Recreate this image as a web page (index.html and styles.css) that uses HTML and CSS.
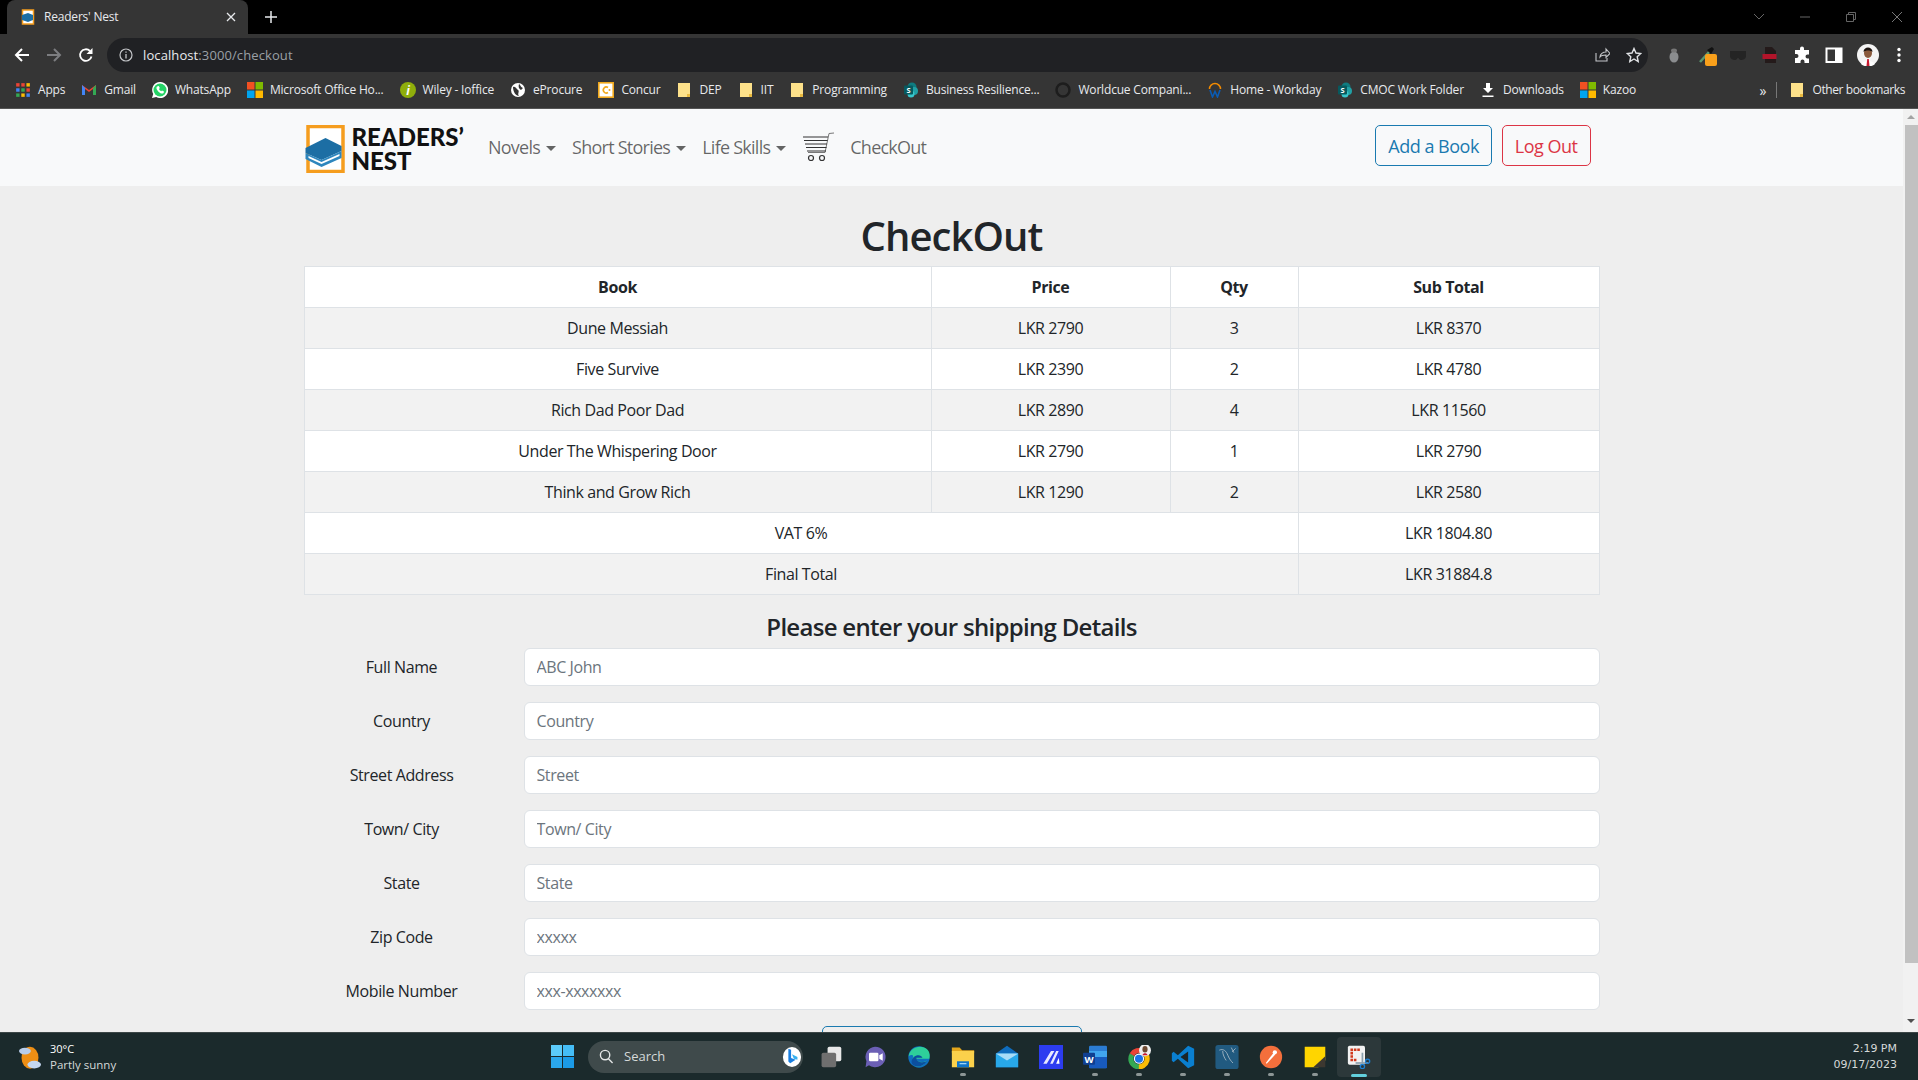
FILE: index.html

```html
<!DOCTYPE html>
<html lang="en">
<head>
    <meta charset="UTF-8">
    <title>Readers' Nest</title>
    <link rel="stylesheet" href="styles.css">
</head>
<body>

<svg class="defs" width="0" height="0">
    <symbol id="folder" viewBox="0 0 16 16"><path d="M2 1h9l3 0v14H2z" fill="#fde18a"/><path d="M11 15v-3h3v3z" fill="#e9b93f"/></symbol>
    <symbol id="sharepoint" viewBox="0 0 16 16"><circle cx="9" cy="5" r="4.500" fill="#0f7c80"/><circle cx="11" cy="9" r="4" fill="#21a0a5"/><circle cx="8" cy="12" r="3.500" fill="#37c6cc"/><rect x="1" y="3.500" width="9" height="9" rx="1" fill="#07595e"/></symbol>
    <symbol id="msgrid" viewBox="0 0 16 16"><rect width="7.500" height="7.500" fill="#f25022"/><rect x="8.500" width="7.500" height="7.500" fill="#7fba00"/><rect y="8.500" width="7.500" height="7.500" fill="#00a4ef"/><rect x="8.500" y="8.500" width="7.500" height="7.500" fill="#ffb900"/></symbol>
</svg>

<div class="tabstrip">
    <div class="tab">
        <svg class="tab-icon" viewBox="0 0 16 16"><rect x="2.500" y="1" width="11" height="14" fill="#fff" stroke="#f59d1e" stroke-width="1.500"/><path d="M2 6l6-2 5 2v5l-5 2-6-2z" fill="#1c6ea4"/></svg>
        <span class="tab-title">Readers' Nest</span>
        <svg class="tab-close" viewBox="0 0 10 10"><path d="M1 1l8 8M9 1l-8 8" stroke="#e8eaed" stroke-width="1.300"/></svg>
    </div>
    <svg class="new-tab" viewBox="0 0 12 12"><path d="M6 0v12M0 6h12" stroke="#e8eaed" stroke-width="1.500"/></svg>
    <div class="window-controls">
        <svg viewBox="0 0 12 12"><path d="M1 3l5 5 5-5" fill="none" stroke="#666" stroke-width="1"/></svg>
        <svg viewBox="0 0 12 12"><path d="M1 6h10" stroke="#666" stroke-width="1"/></svg>
        <svg viewBox="0 0 12 12"><path d="M1.500 3.500h7v7h-7zM3.500 3.500v-2h7v7h-2" fill="none" stroke="#666" stroke-width="1"/></svg>
        <svg viewBox="0 0 12 12"><path d="M1 1l10 10M11 1L1 11" stroke="#777" stroke-width="1"/></svg>
    </div>
</div>

<div class="toolbar">
    <svg class="tool-btn" viewBox="0 0 16 16"><path d="M15 8H2M8 2L2 8l6 6" fill="none" stroke="#fff" stroke-width="2"/></svg>
    <svg class="tool-btn" viewBox="0 0 16 16"><path d="M1 8h13M8 2l6 6-6 6" fill="none" stroke="#7c7d80" stroke-width="2"/></svg>
    <svg class="tool-btn" viewBox="0 0 16 16"><path d="M13.500 9.500A5.800 5.800 0 1 1 12 4" fill="none" stroke="#fff" stroke-width="1.800"/><path d="M14.500 1v6h-6z" fill="#fff"/></svg>
    <div class="omnibox">
        <svg class="omni-info" viewBox="0 0 14 14"><circle cx="7" cy="7" r="6" fill="none" stroke="#c4c6c9" stroke-width="1.200"/><path d="M7 6v4.500M7 3.500v1.300" stroke="#c4c6c9" stroke-width="1.300"/></svg>
        <span class="url"><span class="url-host">localhost</span>:3000/checkout</span>
        <svg class="omni-share" viewBox="0 0 16 16"><path d="M2 6v8h11v-3M6 10c0-3 3-5 6-5V2l4 4.500-4 4V8c-3 0-5 .5-6 2z" fill="none" stroke="#c4c6c9" stroke-width="1.100"/></svg>
        <svg class="omni-star" viewBox="0 0 16 16"><path d="M8 1.500l2 4.500 4.800.5-3.600 3.200 1 4.800L8 12l-4.200 2.500 1-4.800L1.200 6.500 6 6z" fill="none" stroke="#e0e2e5" stroke-width="1.400"/></svg>
    </div>
    <div class="ext-icons">
        <svg viewBox="0 0 18 18"><ellipse cx="9" cy="11" rx="4.500" ry="5.500" fill="#8b8d8f"/><ellipse cx="9" cy="4.500" rx="3" ry="2" fill="#777"/></svg>
        <span class="ext-dropper">
            <svg viewBox="0 0 18 18"><path d="M3 16L12 6" stroke="#5b9a70" stroke-width="2.500"/><path d="M10 4l5-3 2 2-3 5z" fill="#111"/></svg>
            <span class="ext-badge"></span>
        </span>
        <svg viewBox="0 0 18 18"><path d="M1 5h16v5c0 3-3 4-5 4-2 0-2-2-3-2s-1 2-3 2c-2 0-5-1-5-4z" fill="#242424"/></svg>
        <svg viewBox="0 0 18 18"><path d="M4 1h7l4 4v12H4z" fill="#241a1a"/><rect x="1.500" y="8" width="14" height="5" fill="#b3142a"/></svg>
        <svg viewBox="0 0 18 18"><path d="M7 2.500a2 2 0 0 1 4 0V4h5v4.500h-1.500a2 2 0 0 0 0 4H16V17H11.500v-1.500a2 2 0 0 0-4 0V17H2v-5h1.500a2 2 0 0 0 0-4H2V4h5z" fill="#fff"/></svg>
        <svg viewBox="0 0 18 18"><rect x="1.500" y="2.500" width="15" height="13.500" fill="none" stroke="#fff" stroke-width="2"/><rect x="10" y="2.500" width="6.500" height="13.500" fill="#fff"/></svg>
        <svg class="avatar" viewBox="0 0 22 22"><circle cx="11" cy="11" r="11" fill="#f4f4f4"/><ellipse cx="11" cy="9" rx="4" ry="5" fill="#8a5a3c"/><path d="M6.500 8c0-6 9-6 9 0-2-2-7-2-9 0z" fill="#1d1410"/><path d="M4 20c2-4 12-4 14 0a11 11 0 0 1-14 0z" fill="#fff"/><path d="M10.200 15h1.600l.7 7h-3z" fill="#c8192f"/></svg>
        <svg class="ext-menu" viewBox="0 0 18 18"><circle cx="9" cy="3.500" r="1.700" fill="#fff"/><circle cx="9" cy="9" r="1.700" fill="#fff"/><circle cx="9" cy="14.500" r="1.700" fill="#fff"/></svg>
    </div>
</div>

<div class="bookmarks">
    <a class="bm"><svg viewBox="0 0 14 14"><path d="M1 1h3v3H1z" fill="#ea4335"/><path d="M5.500 1h3v3h-3z" fill="#ea4335"/><path d="M10 1h3v3h-3z" fill="#fbbc05"/><path d="M1 5.500h3v3H1z" fill="#4285f4"/><path d="M5.500 5.500h3v3h-3z" fill="#34a853"/><path d="M10 5.500h3v3h-3z" fill="#ea4335"/><path d="M1 10h3v3H1z" fill="#34a853"/><path d="M5.500 10h3v3h-3z" fill="#fbbc05"/><path d="M10 10h3v3h-3z" fill="#4285f4"/></svg>Apps</a>
    <a class="bm"><svg viewBox="0 0 16 16"><path d="M1 3v10h3V7l4 3 4-3v6h3V3l-7 5z" fill="#ea4335"/><path d="M1 3v10h3V6z" fill="#4285f4"/><path d="M15 3v10h-3V6z" fill="#34a853"/></svg>Gmail</a>
    <a class="bm"><svg viewBox="0 0 16 16"><path d="M8 0a8 8 0 0 0-6.800 12L0 16l4.200-1.100A8 8 0 1 0 8 0z" fill="#fff"/><circle cx="8" cy="8" r="6.500" fill="#25d366"/><path d="M5 4.500c-1 1-.8 3 1.500 5.200S10.500 12 11.600 11l.4-1.500-2-1-.8.8c-1-.4-1.800-1.200-2.200-2.200L7.800 6l-1-2z" fill="#fff"/></svg>WhatsApp</a>
    <a class="bm"><svg viewBox="0 0 16 16"><use href="#msgrid"/></svg>Microsoft Office Ho...</a>
    <a class="bm"><svg viewBox="0 0 16 16"><circle cx="8" cy="8" r="8" fill="#8fae0b"/><text x="8" y="13" font-size="12" font-style="italic" font-weight="700" text-anchor="middle" fill="#fff">i</text></svg>Wiley - Ioffice</a>
    <a class="bm"><svg viewBox="0 0 16 16"><circle cx="8" cy="8" r="7" fill="#fff"/><path d="M3 5c3-1 3 2 5 3s-1 4 1 6c-3 0-6-4-6-9zM9 2c2 1 1 3 4 4l-2 2c-2-1-3-3-2-6z" fill="#333"/></svg>eProcure</a>
    <a class="bm"><svg viewBox="0 0 16 16"><rect x=".8" y=".8" width="14.400" height="14.400" fill="#fff" stroke="#f0a81c" stroke-width="1.600"/><path d="M10 5.500a3 3 0 1 0 0 5" fill="none" stroke="#f0a81c" stroke-width="1.600"/><circle cx="11.500" cy="8" r="1" fill="#f0a81c"/></svg>Concur</a>
    <a class="bm"><svg viewBox="0 0 16 16"><use href="#folder"/></svg>DEP</a>
    <a class="bm"><svg viewBox="0 0 16 16"><use href="#folder"/></svg>IIT</a>
    <a class="bm"><svg viewBox="0 0 16 16"><use href="#folder"/></svg>Programming</a>
    <a class="bm"><svg viewBox="0 0 16 16"><use href="#sharepoint"/><text x="5.500" y="11" font-size="7.500" font-weight="700" text-anchor="middle" fill="#fff">S</text></svg>Business Resilience...</a>
    <a class="bm"><svg viewBox="0 0 16 16"><circle cx="8" cy="8" r="6.500" fill="none" stroke="#1d1d1d" stroke-width="2.500"/></svg>Worldcue Compani...</a>
    <a class="bm"><svg viewBox="0 0 16 16"><path d="M2.500 7a5.500 5.500 0 0 1 11 0" fill="none" stroke="#f38b00" stroke-width="1.500"/><path d="M3 8l2.500 7L8 9.500 10.500 15 13 8" fill="none" stroke="#0a5bb5" stroke-width="1.600"/></svg>Home - Workday</a>
    <a class="bm"><svg viewBox="0 0 16 16"><use href="#sharepoint"/><text x="5.500" y="11" font-size="7.500" font-weight="700" text-anchor="middle" fill="#fff">S</text></svg>CMOC Work Folder</a>
    <a class="bm"><svg viewBox="0 0 16 16"><path d="M6 1h4v5h3l-5 5-5-5h3zM2.500 13.500h11V15h-11z" fill="#fff"/></svg>Downloads</a>
    <a class="bm"><svg viewBox="0 0 16 16"><use href="#msgrid"/></svg>Kazoo</a>
    <span class="bm-more">»</span>
    <span class="bm-sep"></span>
    <a class="bm bm-other"><svg viewBox="0 0 16 16"><use href="#folder"/></svg>Other bookmarks</a>
</div>

<div class="viewport">
    <div class="page">
        <nav class="navbar">
            <div class="nav-inner">
                <a class="brand">
                    <svg class="brand-logo" viewBox="0 0 40 48"><rect x="3.500" y="1.500" width="35" height="45" fill="#fff" stroke="#f59d1e" stroke-width="3.500"/><path d="M1 23l20-10 16 8v5L17 35 1 28z" fill="#1c6ea4"/><path d="M1 28l16 7 20-9v7L17 42 1 34z" fill="#2e86bd"/><path d="M4 31l13 6 18-8v2l-18 8-13-6z" fill="#fff"/></svg>
                    <span class="brand-text">READERS’<br>NEST</span>
                </a>
                <ul class="nav-links">
                    <li><a class="nav-link caret">Novels</a></li>
                    <li><a class="nav-link caret">Short Stories</a></li>
                    <li><a class="nav-link caret">Life Skills</a></li>
                    <li class="cart">
                        <svg viewBox="0 0 32 30"><path d="M32 1l-5 .5-4 19H6" fill="none" stroke="#777" stroke-width="1"/><path d="M1 5h25M2 8.500h23.500M3 12h22M4 15.500h20.500M5 19h19" stroke="#333" stroke-width="1.200"/><circle cx="9" cy="26" r="2.500" fill="none" stroke="#333" stroke-width="1.200"/><circle cx="20" cy="26" r="2.500" fill="none" stroke="#333" stroke-width="1.200"/></svg>
                    </li>
                    <li><a class="nav-link">CheckOut</a></li>
                </ul>
                <div class="nav-actions">
                    <button class="btn btn-blue">Add a Book</button>
                    <button class="btn btn-red">Log Out</button>
                </div>
            </div>
        </nav>

        <main class="container">
            <h1>CheckOut</h1>
            <table class="cart-table">
                <thead>
                    <tr><th>Book</th><th>Price</th><th>Qty</th><th>Sub Total</th></tr>
                </thead>
                <tbody>
                    <tr><td>Dune Messiah</td><td>LKR 2790</td><td>3</td><td>LKR 8370</td></tr>
                    <tr><td>Five Survive</td><td>LKR 2390</td><td>2</td><td>LKR 4780</td></tr>
                    <tr><td>Rich Dad Poor Dad</td><td>LKR 2890</td><td>4</td><td>LKR 11560</td></tr>
                    <tr><td>Under The Whispering Door</td><td>LKR 2790</td><td>1</td><td>LKR 2790</td></tr>
                    <tr><td>Think and Grow Rich</td><td>LKR 1290</td><td>2</td><td>LKR 2580</td></tr>
                    <tr><td colspan="3">VAT 6%</td><td>LKR 1804.80</td></tr>
                    <tr><td colspan="3">Final Total</td><td>LKR 31884.8</td></tr>
                </tbody>
            </table>

            <h2>Please enter your shipping Details</h2>
            <form class="ship-form">
                <label>Full Name</label><input type="text" placeholder="ABC John">
                <label>Country</label><input type="text" placeholder="Country">
                <label>Street Address</label><input type="text" placeholder="Street">
                <label>Town/ City</label><input type="text" placeholder="Town/ City">
                <label>State</label><input type="text" placeholder="State">
                <label>Zip Code</label><input type="text" placeholder="xxxxx">
                <label>Mobile Number</label><input type="text" placeholder="xxx-xxxxxxx">
            </form>
            <div class="submit-row"><button class="btn btn-blue btn-submit"></button></div>
        </main>
    </div>
    <div class="scrollbar">
        <span class="arrow-up"></span>
        <span class="thumb"></span>
        <span class="arrow-down"></span>
    </div>
</div>

<footer class="taskbar">
    <div class="weather">
        <svg viewBox="0 0 26 30"><ellipse cx="13" cy="16" rx="10" ry="13" fill="#ee8e14"/><ellipse cx="7" cy="8" rx="7" ry="4" fill="#b9cdea"/><ellipse cx="18" cy="24" rx="8" ry="4.500" fill="#c4d6ef"/></svg>
        <div class="weather-text"><span class="temp">30°C</span><span class="cond">Partly sunny</span></div>
    </div>
    <div class="task-center">
        <svg class="task-icon" viewBox="0 0 24 24"><path d="M0 0h11.500v11.500H0z" fill="#5ccbfa"/><path d="M12.500 0H24v11.500H12.500z" fill="#45bdf6"/><path d="M0 12.500h11.500V24H0z" fill="#2aa7ec"/><path d="M12.500 12.500H24V24H12.500z" fill="#1b9ae6"/></svg>
        <div class="search">
            <svg viewBox="0 0 16 16"><circle cx="6.500" cy="6.500" r="5" fill="none" stroke="#e4e6e6" stroke-width="1.500"/><path d="M10 10.500l4.500 4.500" stroke="#e4e6e6" stroke-width="1.500"/></svg>
            <span>Search</span>
            <svg class="bing" viewBox="0 0 22 24"><ellipse cx="11" cy="12" rx="10" ry="11" fill="#fff"/><path d="M7 3l3 1v9l5 2-6 4-2-2z" fill="#1a7fe0"/><path d="M11 9l6 3v3l-4-1z" fill="#35b0f0"/></svg>
        </div>
        <div class="task-apps">
            <span class="app"><svg viewBox="0 0 28 28"><rect x="10" y="2" width="16" height="17" rx="2" fill="#e8e8e8"/><rect x="3" y="9" width="17" height="17" rx="2" fill="#6f6f6f"/></svg></span>
            <span class="app"><svg viewBox="0 0 28 28"><path d="M14 2a12 12 0 1 1-7 21.500L3 26l1-7A12 12 0 0 1 14 2z" fill="#6b5fb5"/><rect x="7" y="9" width="11" height="10" rx="1.500" fill="#fff"/><path d="M19 12l4-2.500v9L19 16z" fill="#fff"/></svg></span>
            <span class="app"><svg viewBox="0 0 28 28"><circle cx="14" cy="14" r="12.500" fill="#0f6fbf"/><path d="M2 13C3 4 13 0 20 3s7 9 6 13H11c1 4 8 5 12 2-3 6-10 9-15 6 3 0-3-4-1-10 1-3-3-3-5-1z" fill="#2ecf9a"/><path d="M8 14c3-3 9-3 10 1H11c0 4 5 7 12 4-3 5-10 8-15 5-4-3-3-7 0-10z" fill="#0c4f9e"/></svg></span>
            <span class="app open"><svg viewBox="0 0 28 28"><path d="M1 3h9l3 3h14v3H1z" fill="#e3a61c"/><path d="M1 7h26v19H1z" fill="#fbd14b"/><rect x="7" y="19" width="14" height="7" fill="#0f74c9"/><rect x="10" y="21" width="8" height="1.500" fill="#9fd4f5"/></svg></span>
            <span class="app"><svg viewBox="0 0 28 28"><path d="M14 1L1 10v16h26V10z" fill="#0f6cbd"/><path d="M1 10h26v16H1z" fill="#28a8ea"/><path d="M1 10l13 8 13-8" fill="#a8dcf7"/></svg></span>
            <span class="app"><svg viewBox="0 0 28 28"><rect width="28" height="28" fill="#2c3cf0"/><path d="M5 22L14 7h4L9 22zM13 22l7-15h3l-7 15z" fill="#e8e8ff"/><path d="M20 22l3-7 1 7z" fill="#fff"/></svg></span>
            <span class="app open"><svg viewBox="0 0 28 28"><rect x="7" y="1" width="21" height="26" rx="1.500" fill="#2b7cd3"/><rect x="7" y="14" width="21" height="13" fill="#185abd"/><rect x="7" y="7" width="21" height="7" fill="#41a5ee"/><rect y="9" width="14" height="14" rx="1" fill="#103f91"/><text x="7" y="20.500" font-size="11" font-weight="700" text-anchor="middle" fill="#fff">W</text></svg></span>
            <span class="app open"><svg viewBox="0 0 28 28"><circle cx="14" cy="16" r="9.500" fill="none" stroke="#34a853" stroke-width="6" stroke-dasharray="20 40" transform="rotate(90 14 16)"/><circle cx="14" cy="16" r="9.500" fill="none" stroke="#fbbc05" stroke-width="6" stroke-dasharray="20 40" transform="rotate(-30 14 16)"/><circle cx="14" cy="16" r="9.500" fill="none" stroke="#ea4335" stroke-width="6" stroke-dasharray="20 40" transform="rotate(210 14 16)"/><circle cx="14" cy="16" r="6" fill="#fff"/><circle cx="14" cy="16" r="4.700" fill="#1a73e8"/><circle cx="21" cy="6" r="7" fill="#eee"/><ellipse cx="21" cy="5" rx="3" ry="3.800" fill="#6e4a32"/><path d="M18 12c1-3 5-3 6 0z" fill="#c8192f"/></svg></span>
            <span class="app open"><svg viewBox="0 0 28 28"><path d="M20 1l7 3.500v19L20 27 8 16l-5 4-2-1.500V9.500L3 8l5 4z" fill="#0a7fd0"/><path d="M20 7.500L11 14l9 6.500z" fill="#1b2528"/></svg></span>
            <span class="app open"><svg viewBox="0 0 28 28"><rect width="27" height="28" x=".5" rx="3" fill="#215a80"/><path d="M5 6c5-2 8 1 10 6s4 7 6 9M9 7c0 4 2 8 4 11M19 3l3 6M24 4l-4 4" fill="none" stroke="#b9c6cf" stroke-width=".9"/></svg></span>
            <span class="app open"><svg viewBox="0 0 28 28"><circle cx="14" cy="14" r="13" fill="#f36f3c"/><path d="M8 21l9-12 2 2-10 11z" fill="#fff"/><circle cx="18.500" cy="8.500" r="2.500" fill="#fff"/></svg></span>
            <span class="app open"><svg viewBox="0 0 28 28"><path d="M2 2h24v16l-8 8H2z" fill="#ffd500"/><path d="M26 13v13H12z" fill="#3d3830"/></svg></span>
            <span class="app active"><svg viewBox="0 0 28 28"><rect x="1" y="1" width="20" height="22" rx="2" fill="#f2f2f2"/><path d="M4 4h3v3H4zM8 4h3v3H8zM12 4h3v3h-3zM4 8h3v3H4zM4 12h3v3H4zM4 16h3v3H4zM8 16h3v3H8z" fill="#d13a1e"/><path d="M18 9v12" stroke="#8aa0ad" stroke-width="2"/><path d="M10 21h15" stroke="#8aa0ad" stroke-width="2"/><circle cx="24" cy="19" r="2.500" fill="none" stroke="#1b7fd4" stroke-width="1.500"/><circle cx="18" cy="25" r="2.500" fill="none" stroke="#1b7fd4" stroke-width="1.500"/></svg></span>
        </div>
    </div>
    <div class="clock"><span>2:19 PM</span><span>09/17/2023</span></div>
</footer>

</body>
</html>
```

FILE: styles.css

```css
* {
    box-sizing: border-box;
}
html, body {
    margin: 0;
    height: 100%;
    overflow: hidden;
}
body {
    display: flex;
    flex-direction: column;
    height: 1080px;
    font-family: "Open Sans", "Noto Sans", sans-serif;
    font-size: 16px;
    line-height: 1.5;
    color: #212529;
    background-color: #eee;
}
.defs {
    display: none;
}

/* browser chrome */
.tabstrip {
    display: flex;
    align-items: flex-end;
    height: 34px;
    background-color: #000;
    flex-shrink: 0;
}
.tab {
    display: flex;
    align-items: center;
    width: 241px;
    height: 34px;
    margin-left: 7px;
    padding: 0 12px 0 13px;
    background-color: #353535;
    border-radius: 8px 8px 0 0;
}
.tab-icon {
    width: 16px;
    height: 16px;
}
.tab-title {
    flex: 1;
    margin-left: 8px;
    font-size: 12px;
    letter-spacing: -0.2px;
    color: #e8eaed;
}
.tab-close {
    width: 10px;
    height: 10px;
}
.new-tab {
    width: 12px;
    height: 12px;
    margin: 0 0 11px 17px;
}
.window-controls {
    display: flex;
    gap: 34px;
    margin: 0 15px 11px auto;
}
.window-controls svg {
    width: 12px;
    height: 12px;
}
.toolbar {
    display: flex;
    align-items: center;
    height: 38px;
    padding: 4px 0 0 14px;
    background-color: #353535;
    flex-shrink: 0;
}
.tool-btn {
    width: 16px;
    height: 16px;
    margin-right: 16px;
}
.omnibox {
    display: flex;
    align-items: center;
    width: 1541px;
    height: 34px;
    margin-left: -3px;
    padding: 0 6px 0 12px;
    background-color: #202124;
    border-radius: 17px;
}
.omni-info {
    width: 14px;
    height: 14px;
}
.url {
    margin-left: 10px;
    padding-top: 2px;
    font-size: 13px;
    letter-spacing: 0.1px;
    color: #9aa0a6;
}
.url-host {
    color: #e8eaed;
}
.omni-share {
    width: 16px;
    height: 16px;
    margin-left: auto;
}
.omni-star {
    width: 16px;
    height: 16px;
    margin-left: 16px;
}
.ext-icons {
    display: flex;
    align-items: center;
    gap: 14px;
    margin-left: 17px;
}
.ext-icons svg {
    display: block;
    width: 18px;
    height: 18px;
}
.ext-icons .avatar {
    width: 22px;
    height: 22px;
}
.ext-icons .ext-menu {
    margin-left: -3px;
}
.ext-dropper {
    position: relative;
}
.ext-badge {
    position: absolute;
    top: 8px;
    left: 8px;
    width: 12px;
    height: 12px;
    background-color: #f9a01b;
    border-radius: 2px;
}
.bookmarks {
    display: flex;
    align-items: center;
    height: 37px;
    padding: 0 5px 0 7px;
    background-color: #353535;
    border-bottom: 1px solid #555;
    flex-shrink: 0;
}
.bm {
    display: flex;
    align-items: center;
    gap: 7px;
    padding: 0 8px;
    font-size: 12px;
    letter-spacing: -0.18px;
    color: #e8eaed;
    white-space: nowrap;
}
.bm svg {
    width: 16px;
    height: 16px;
    flex-shrink: 0;
}
.bm-other {
    letter-spacing: -0.4px;
}
.bm-more {
    margin-left: auto;
    font-size: 14px;
    color: #e8eaed;
}
.bm-sep {
    width: 1px;
    height: 16px;
    margin: 0 4px 0 10px;
    background-color: #777;
}

/* page */
.viewport {
    display: flex;
    flex: 1;
    min-height: 0;
}
.page {
    flex: 1;
    min-width: 0;
    overflow: hidden;
}
.navbar {
    height: 77px;
    background-color: #f8f9fa;
}
.nav-inner {
    display: flex;
    align-items: center;
    max-width: 1320px;
    height: 100%;
    margin: 0 auto;
    padding: 0 12px 1px;
}
.brand {
    display: flex;
    align-items: center;
    gap: 7px;
    margin-top: 4px;
    margin-right: 16px;
}
.brand-logo {
    width: 41px;
    height: 48px;
}
.brand-text {
    font-family: "Lato", sans-serif;
    font-size: 24px;
    font-weight: 900;
    line-height: 24px;
    color: #111;
}
.nav-links {
    display: flex;
    align-items: center;
    margin: 0;
    padding: 0;
    list-style: none;
}
.nav-link {
    display: block;
    padding: 0 8px;
    font-size: 18px;
    letter-spacing: -0.75px;
    color: rgba(0, 0, 0, 0.6);
}
.caret::after {
    content: "";
    display: inline-block;
    margin-left: 6px;
    vertical-align: 3px;
    border-top: 5px solid;
    border-right: 5px solid transparent;
    border-left: 5px solid transparent;
}
.cart {
    padding: 0 8px;
}
.cart svg {
    display: block;
    width: 32px;
    height: 30px;
}
.nav-actions {
    display: flex;
    gap: 10px;
    margin: 0 9px 3px auto;
}
.btn {
    height: 41px;
    padding: 0 12px;
    font-family: inherit;
    font-size: 18px;
    letter-spacing: -0.5px;
    background: transparent;
    border: 1px solid;
    border-radius: 5px;
}
.btn-blue {
    color: #1a7ab0;
    border-color: #1a7ab0;
}
.btn-red {
    color: #dc3545;
    border-color: #dc3545;
}
.container {
    max-width: 1320px;
    margin: 0 auto;
    padding: 26px 12px 0;
}
h1 {
    margin: 0 0 6px;
    font-size: 40px;
    font-weight: 550;
    line-height: 48px;
    letter-spacing: -0.9px;
    text-align: center;
}
h2 {
    margin: 17px 0 7px;
    font-size: 24px;
    font-weight: 600;
    line-height: 29px;
    letter-spacing: -0.7px;
    text-align: center;
}
.cart-table {
    width: 100%;
    border-collapse: collapse;
    text-align: center;
    letter-spacing: -0.4px;
    background-color: #fff;
}
.cart-table th, .cart-table td {
    height: 41px;
    padding: 8px;
    border: 1px solid #dee2e6;
}
.cart-table th {
    font-weight: 700;
}
.cart-table tbody tr:nth-child(odd) {
    background-color: #f2f2f2;
}
.cart-table th:nth-child(1) {
    width: 627px;
}
.cart-table th:nth-child(2) {
    width: 239px;
}
.cart-table th:nth-child(3) {
    width: 128px;
}
.ship-form {
    display: grid;
    grid-template-columns: 220px 1fr;
    row-gap: 16px;
    align-items: center;
    margin-left: -12px;
}
.ship-form label {
    text-align: center;
    letter-spacing: -0.4px;
}
.ship-form input {
    width: calc(100% - 12px);
    height: 38px;
    margin-left: 12px;
    padding: 6px 12px;
    font-family: inherit;
    font-size: 16px;
    letter-spacing: -0.4px;
    background-color: #fff;
    border: 1px solid #dee2e6;
    border-radius: 6px;
}
.ship-form input::placeholder {
    color: #6c757d;
}
.submit-row {
    display: flex;
    justify-content: center;
    margin-top: 16px;
}
.btn-submit {
    width: 260px;
}
.scrollbar {
    display: flex;
    flex-direction: column;
    align-items: center;
    width: 15px;
    background-color: #f1f1f1;
}
.arrow-up {
    margin: 6px 0 6px;
    border-right: 4px solid transparent;
    border-left: 4px solid transparent;
    border-bottom: 4px solid #a3a3a3;
}
.thumb {
    width: 100%;
    height: 838px;
    margin-left: 3px;
    background-color: #c1c1c1;
}
.arrow-down {
    margin-top: 56px;
    border-right: 4px solid transparent;
    border-left: 4px solid transparent;
    border-top: 4px solid #505050;
}

/* windows taskbar */
.taskbar {
    display: flex;
    align-items: center;
    height: 48px;
    background-color: #1b2a2c;
    border-top: 1px solid #3c4647;
    flex-shrink: 0;
}
.weather {
    display: flex;
    align-items: center;
    gap: 9px;
    width: 551px;
    padding-left: 19px;
}
.weather svg {
    width: 22px;
    height: 26px;
}
.weather-text {
    display: flex;
    flex-direction: column;
    line-height: 16px;
}
.temp {
    font-size: 11px;
    color: #fff;
}
.cond {
    font-size: 11.5px;
    color: #d5d9d9;
}
.task-center {
    display: flex;
    align-items: center;
}
.task-icon {
    width: 23px;
    height: 23px;
}
.search {
    display: flex;
    align-items: center;
    width: 215px;
    height: 32px;
    margin-left: 14px;
    padding-left: 11px;
    font-size: 13px;
    color: #d5d9d9;
    background-color: #3f4a4b;
    border-radius: 16px;
}
.search svg {
    width: 15px;
    height: 15px;
}
.search span {
    margin-left: 10px;
}
.search .bing {
    width: 20px;
    height: 22px;
    margin-left: auto;
    margin-right: 1px;
}
.task-apps {
    display: flex;
    margin-left: 6px;
}
.app {
    position: relative;
    display: flex;
    align-items: center;
    justify-content: center;
    width: 44px;
    height: 40px;
    border-radius: 4px;
}
.app svg {
    width: 24px;
    height: 24px;
}
.app.open::after {
    content: "";
    position: absolute;
    bottom: 1px;
    left: 19px;
    width: 6px;
    height: 3px;
    background-color: #8d9696;
    border-radius: 2px;
}
.app.active {
    background-color: #2c383a;
}
.app.active::after {
    content: "";
    position: absolute;
    bottom: 0;
    left: 14px;
    width: 16px;
    height: 3px;
    background-color: #62d0dc;
    border-radius: 2px;
}
.clock {
    display: flex;
    flex-direction: column;
    align-items: flex-end;
    margin-left: auto;
    margin-right: 21px;
    font-family: "DejaVu Sans", sans-serif;
    font-size: 11px;
    line-height: 16px;
    color: #d5d9d9;
}
```
